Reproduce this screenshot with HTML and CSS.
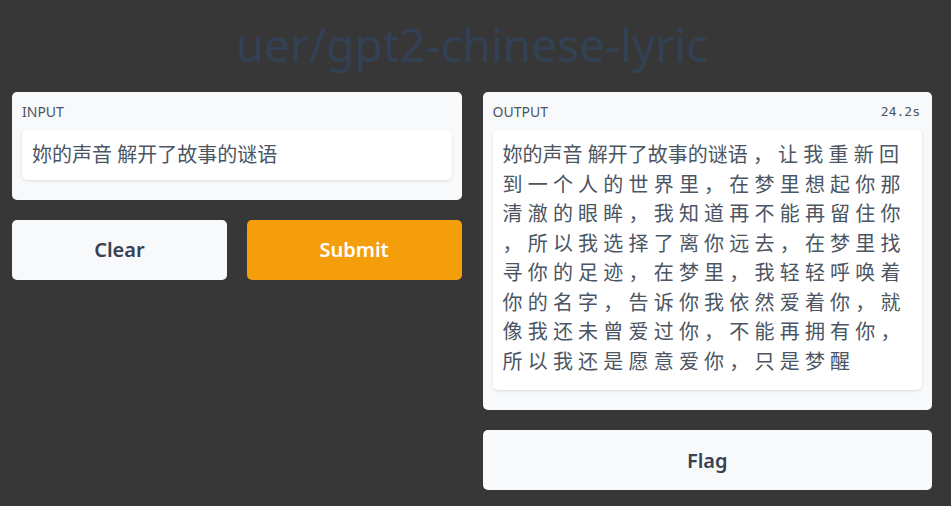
FILE: index.html
```html
<!DOCTYPE html>
<html>
<head>
<meta charset="UTF-8">
<title>uer/gpt2-chinese-lyric</title>
<link rel="stylesheet" href="styles.css">
</head>
<body>
<div class="page">
  <h1 class="title">uer/gpt2-chinese-lyric</h1>
  <div class="columns">
    <div class="col">
      <div class="panel">
        <div class="panel-head"><span class="label">INPUT</span></div>
        <div class="textbox">妳的声音 解开了故事的谜语</div>
      </div>
      <div class="btn-row">
        <button class="btn">Clear</button>
        <button class="btn btn-submit">Submit</button>
      </div>
    </div>
    <div class="col">
      <div class="panel">
        <div class="panel-head"><span class="label">OUTPUT</span><span class="timer">24.2s</span></div>
        <div class="textbox output-text">妳的声音 解开了故事的谜语 ， 让 我 重 新 回 到 一 个 人 的 世 界 里 ， 在 梦 里 想 起 你 那 清 澈 的 眼 眸 ， 我 知 道 再 不 能 再 留 住 你 ， 所 以 我 选 择 了 离 你 远 去 ， 在 梦 里 找 寻 你 的 足 迹 ， 在 梦 里 ， 我 轻 轻 呼 唤 着 你 的 名 字 ， 告 诉 你 我 依 然 爱 着 你 ， 就 像 我 还 未 曾 爱 过 你 ， 不 能 再 拥 有 你 ， 所 以 我 还 是 愿 意 爱 你 ， 只 是 梦 醒</div>
      </div>
      <button class="btn btn-flag">Flag</button>
    </div>
  </div>
</div>
</body>
</html>
```

FILE: styles.css
```css
body{
  margin: 0;
  background-color: #373737;
  font-family: "Noto Sans", "Noto Sans CJK SC", sans-serif;
  color: #374151;
}
.page{
  width: 920px;
  padding: 12px 0 0 12px;
}
.title{
  margin: 0;
  padding-top: 8px;
  margin-bottom: 24px;
  height: 48px;
  line-height: 48px;
  text-align: center;
  font-size: 46px;
  font-weight: 400;
  color: #334155;
}
.columns{
  display: flex;
  gap: 21px;
}
.col{
  flex: 1;
  display: flex;
  flex-direction: column;
  gap: 20px;
}
.panel{
  background-color: #f8f9fb;
  border-radius: 5px;
  padding: 8px 10px 20px 10px;
}
.panel-head{
  display: flex;
  justify-content: space-between;
  align-items: center;
  height: 22px;
  margin-bottom: 8px;
}
.label{
  font-size: 14px;
  color: #4b5563;
}
.timer{
  font-family: "DejaVu Sans Mono", monospace;
  font-size: 13px;
  color: #4b5563;
  margin-right: 2px;
}
.textbox{
  background-color: #fff;
  border-radius: 5px;
  box-shadow: 0 1px 3px rgba(0,0,0,0.12);
  padding: 10px;
  font-size: 20px;
  line-height: 29.5px;
  color: #4b5563;
}
.output-text{
  padding-bottom: 14px;
}
.btn-row{
  display: flex;
  gap: 20px;
}
.btn{
  flex: 1;
  height: 60px;
  border: none;
  border-radius: 5px;
  background-color: #f8f9fb;
  font-family: "Noto Sans", sans-serif;
  font-size: 20px;
  font-weight: 600;
  color: #374151;
  cursor: pointer;
}
.btn-submit{
  background-color: #f59e0b;
  color: #fff;
}
.btn-flag{
  flex: none;
}
```
